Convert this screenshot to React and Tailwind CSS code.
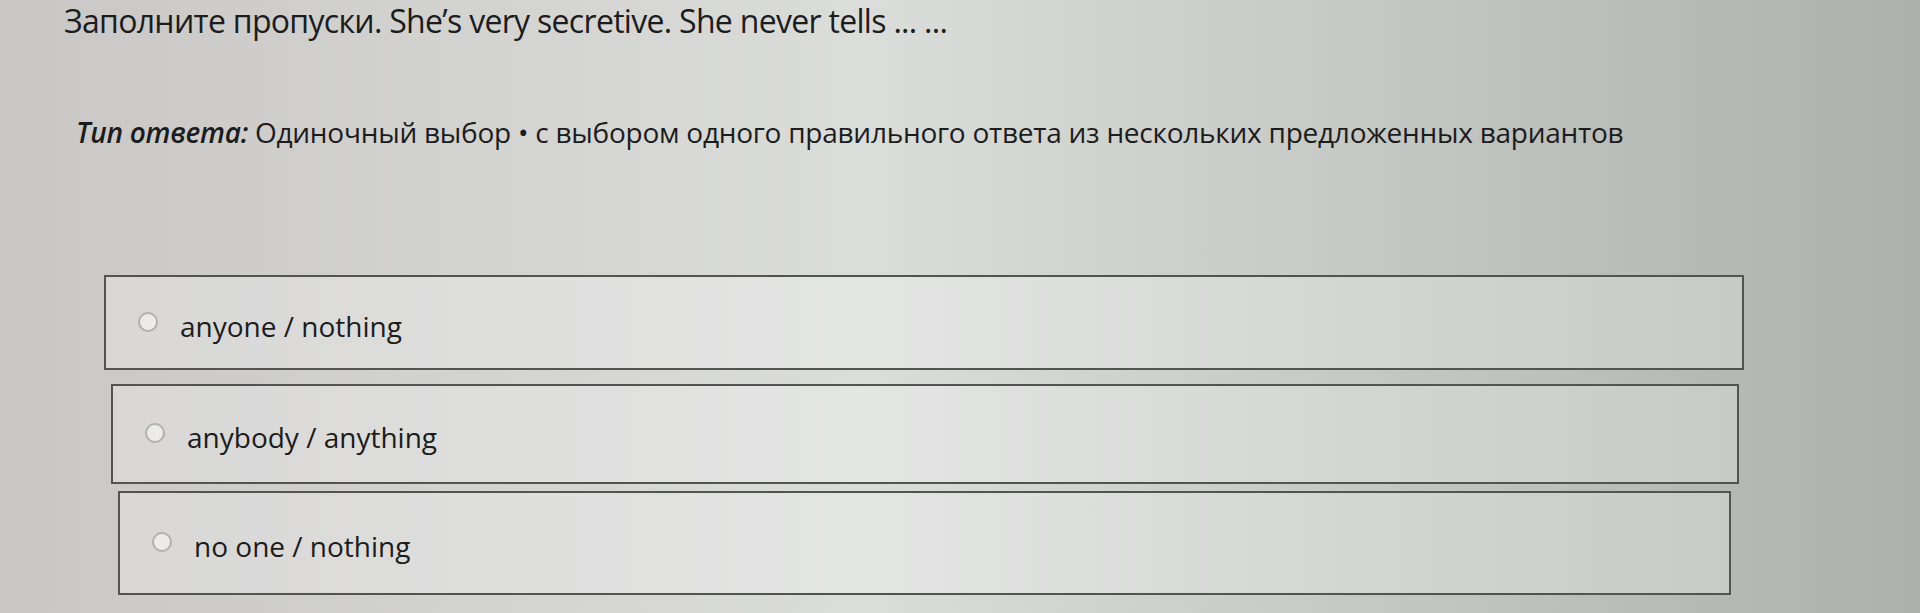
import React, { useState } from 'react';

const options = [
  { id: 1, label: 'anyone / nothing', box: 'ml-[104px] w-[1640px] h-[95px] mt-[123px]' },
  { id: 2, label: 'anybody / anything', box: 'ml-[111px] w-[1628px] h-[100px] mt-[14px]' },
  { id: 3, label: 'no one / nothing', box: 'ml-[118px] w-[1613px] h-[104px] mt-[7px]' },
];

const App = () => {
  const [picked, setPicked] = useState(null);

  return (
    <div className="min-h-[613px] w-[1920px] overflow-hidden bg-linear-to-r from-[#c9c7c6] via-[#dbdddb] via-45% to-[#adb1ad] font-['Open_Sans',sans-serif] text-[#1c1c1c]">
      {/* Question */}
      <h1 className="pt-[2px] pl-[64px] text-[32px] leading-[38px] font-normal tracking-[-0.7px]">
        Заполните пропуски. She’s very secretive. She never tells ... ...
      </h1>

      {/* Answer type */}
      <p className="mt-[72px] pl-[76px] text-[28px] leading-[40px] tracking-[-0.25px]">
        <span className="italic font-semibold">Тип ответа:</span> Одиночный выбор • с выбором одного правильного ответа из нескольких предложенных вариантов
      </p>

      {/* Options */}
      <div className="flex flex-col">
        {options.map((opt) => (
          <label
            key={opt.id}
            onClick={() => setPicked(opt.id)}
            className={`${opt.box} flex items-center gap-[22px] pl-[32px] border-2 border-[#525452] bg-white/25 cursor-pointer`}
          >
            <span className="w-[20px] h-[20px] rounded-full border-2 border-[#b0b1af] bg-[#ebebe9] flex items-center justify-center mb-[2px]">
              {picked === opt.id && <span className="w-[8px] h-[8px] rounded-full bg-[#333]" />}
            </span>
            <span className="text-[28px] leading-[36px] pt-[6px]">{opt.label}</span>
          </label>
        ))}
      </div>
    </div>
  );
};

export default App;
